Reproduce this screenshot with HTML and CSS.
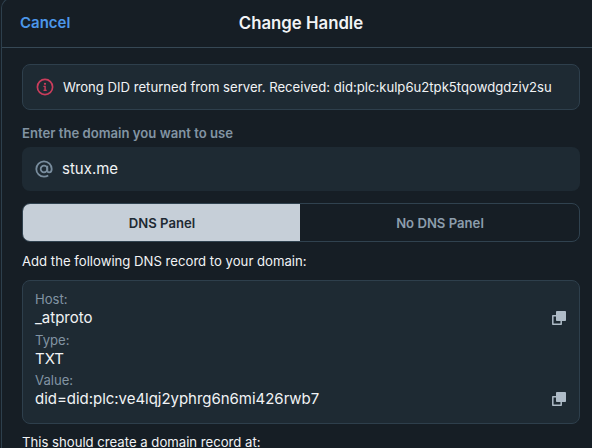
FILE: index.html
```html
<!DOCTYPE html>
<html lang="en">
<head>
<meta charset="utf-8">
<title>Change Handle</title>
<link rel="stylesheet" href="styles.css">
</head>
<body>
<main class="dialog">
  <header class="header">
    <button class="cancel">Cancel</button>
    <h1 class="title">Change Handle</h1>
    <span></span>
  </header>
  <div class="content">
    <div class="alert">
      <svg class="alert-icon" viewBox="0 0 18 18" width="18" height="18" fill="none" stroke="currentColor">
        <circle cx="9" cy="9" r="7.6" stroke-width="1.7"/>
        <path d="M7.4 8.4H9.1V12.5M7.5 12.4H10.7" stroke-width="1.4"/>
        <circle cx="9" cy="5.8" r="1.1" fill="currentColor" stroke="none"/>
      </svg>
      <span class="alert-text">Wrong DID returned from server. Received: did:plc:kulp6u2tpk5tqowdgdziv2su</span>
    </div>
    <div class="label">Enter the domain you want to use</div>
    <div class="field">
      <svg class="at" viewBox="0 0 18 18" width="18" height="18" fill="none" stroke="currentColor" stroke-width="1.8">
        <circle cx="9" cy="9" r="3.3"/>
        <path d="M12.3 5.7V10.2C12.3 11.7 13.1 12.3 14.2 12.3C15.8 12.3 16.7 10.9 16.7 9A7.7 7.7 0 1 0 9 16.7C10.6 16.7 12 16.3 13.2 15.5"/>
      </svg>
      <span class="domain">stux.me</span>
    </div>
    <div class="tabs">
      <button class="tab tab-active">DNS Panel</button>
      <button class="tab">No DNS Panel</button>
    </div>
    <p class="note note-add">Add the following DNS record to your domain:</p>
    <section class="record">
      <div class="key">Host:</div>
      <div class="row"><span class="value host">_atproto</span>
        <svg class="copy" viewBox="0 0 14 14" width="14" height="14"><rect x="4" width="10" height="10" rx=".8" fill="currentColor"/><path d="M4 4.8H.8V13.2H9.2V10" fill="none" stroke="currentColor" stroke-width="1.5" stroke-linejoin="round"/></svg>
      </div>
      <div class="key">Type:</div>
      <div class="row"><span class="value">TXT</span></div>
      <div class="key">Value:</div>
      <div class="row"><span class="value did">did=did:plc:ve4lqj2yphrg6n6mi426rwb7</span>
        <svg class="copy" viewBox="0 0 14 14" width="14" height="14"><rect x="4" width="10" height="10" rx=".8" fill="currentColor"/><path d="M4 4.8H.8V13.2H9.2V10" fill="none" stroke="currentColor" stroke-width="1.5" stroke-linejoin="round"/></svg>
      </div>
    </section>
    <p class="note note-at">This should create a domain record at:</p>
  </div>
</main>
</body>
</html>
```
FILE: styles.css
```css
* { box-sizing: border-box; }
body {
  display: flow-root;
  margin: 0;
  height: 448px;
  overflow: hidden;
  background: #161e25;
  color: #f1f3f5;
  font-family: Inter, "Liberation Sans", sans-serif;
}
button {
  margin: 0;
  padding: 0;
  border: 0;
  background: none;
  font: inherit;
}
.dialog {
  height: 450px;
  margin: -2px 0 0 1px;
  overflow: hidden;
  border-left: 1px solid #2d3f4c;
  border-top: 1px solid #2d3f4c;
  border-top-left-radius: 10px;
}
.header {
  display: grid;
  grid-template-columns: 1fr auto 1fr;
  align-items: center;
  height: 49px;
  padding: 0 10px 0 18px;
  border-bottom: 1px solid #364855;
}
.cancel {
  justify-self: start;
  color: #4c97ea;
  font-size: 15px;
  font-weight: 600;
  line-height: 20px;
}
.title {
  margin: 0;
  font-size: 16.8px;
  font-weight: 600;
  line-height: 20px;
}
.content { padding: 16px 12px 0 20px; }
.alert {
  display: flex;
  align-items: center;
  gap: 9px;
  height: 46px;
  padding: 0 13px;
  border: 1px solid #2e3f4c;
  border-radius: 8px;
  background: #1e2a33;
}
.alert-icon { color: #cb3d5c; }
.alert-text {
  font-size: 13.13px;
  white-space: nowrap;
}
.label {
  margin: 14px 0 4px;
  color: #8294a3;
  font-size: 13.13px;
  font-weight: 600;
  line-height: 19px;
}
.field {
  display: flex;
  align-items: center;
  gap: 9px;
  height: 44px;
  padding: 0 13px;
  border-radius: 8px;
  background: #1e2a33;
}
.at { color: #788c9d; }
.domain {
  padding-bottom: 1px;
  font-size: 15px;
}
.tabs {
  display: grid;
  grid-template-columns: 277px 1fr;
  height: 39px;
  margin-top: 12px;
  overflow: hidden;
  border: 1px solid #30424f;
  border-radius: 8px;
}
.tab {
  padding-left: 1px;
  color: #8c9dac;
  font-size: 13.13px;
  font-weight: 600;
}
.tab-active {
  background: #c6cfd8;
  color: #1e2a33;
}
.note {
  margin: 0;
  font-size: 13.15px;
  line-height: 18px;
}
.note-add { margin: 10px 0; }
.record {
  height: 144px;
  padding: 9px 13px 0 12px;
  border: 1px solid #2e3f4c;
  border-radius: 8px;
  background: #1e2a33;
}
.key {
  color: #8294a3;
  font-size: 13.13px;
  line-height: 18px;
}
.row {
  display: flex;
  align-items: center;
  justify-content: space-between;
  height: 20px;
  margin-bottom: 2.5px;
}
.value { font-size: 15px; }
.host,
.did { padding-bottom: 1px; }
.did { letter-spacing: -0.03px; }
.copy { color: #aebbc7; }
.note-at { margin-top: 9px; }
```
